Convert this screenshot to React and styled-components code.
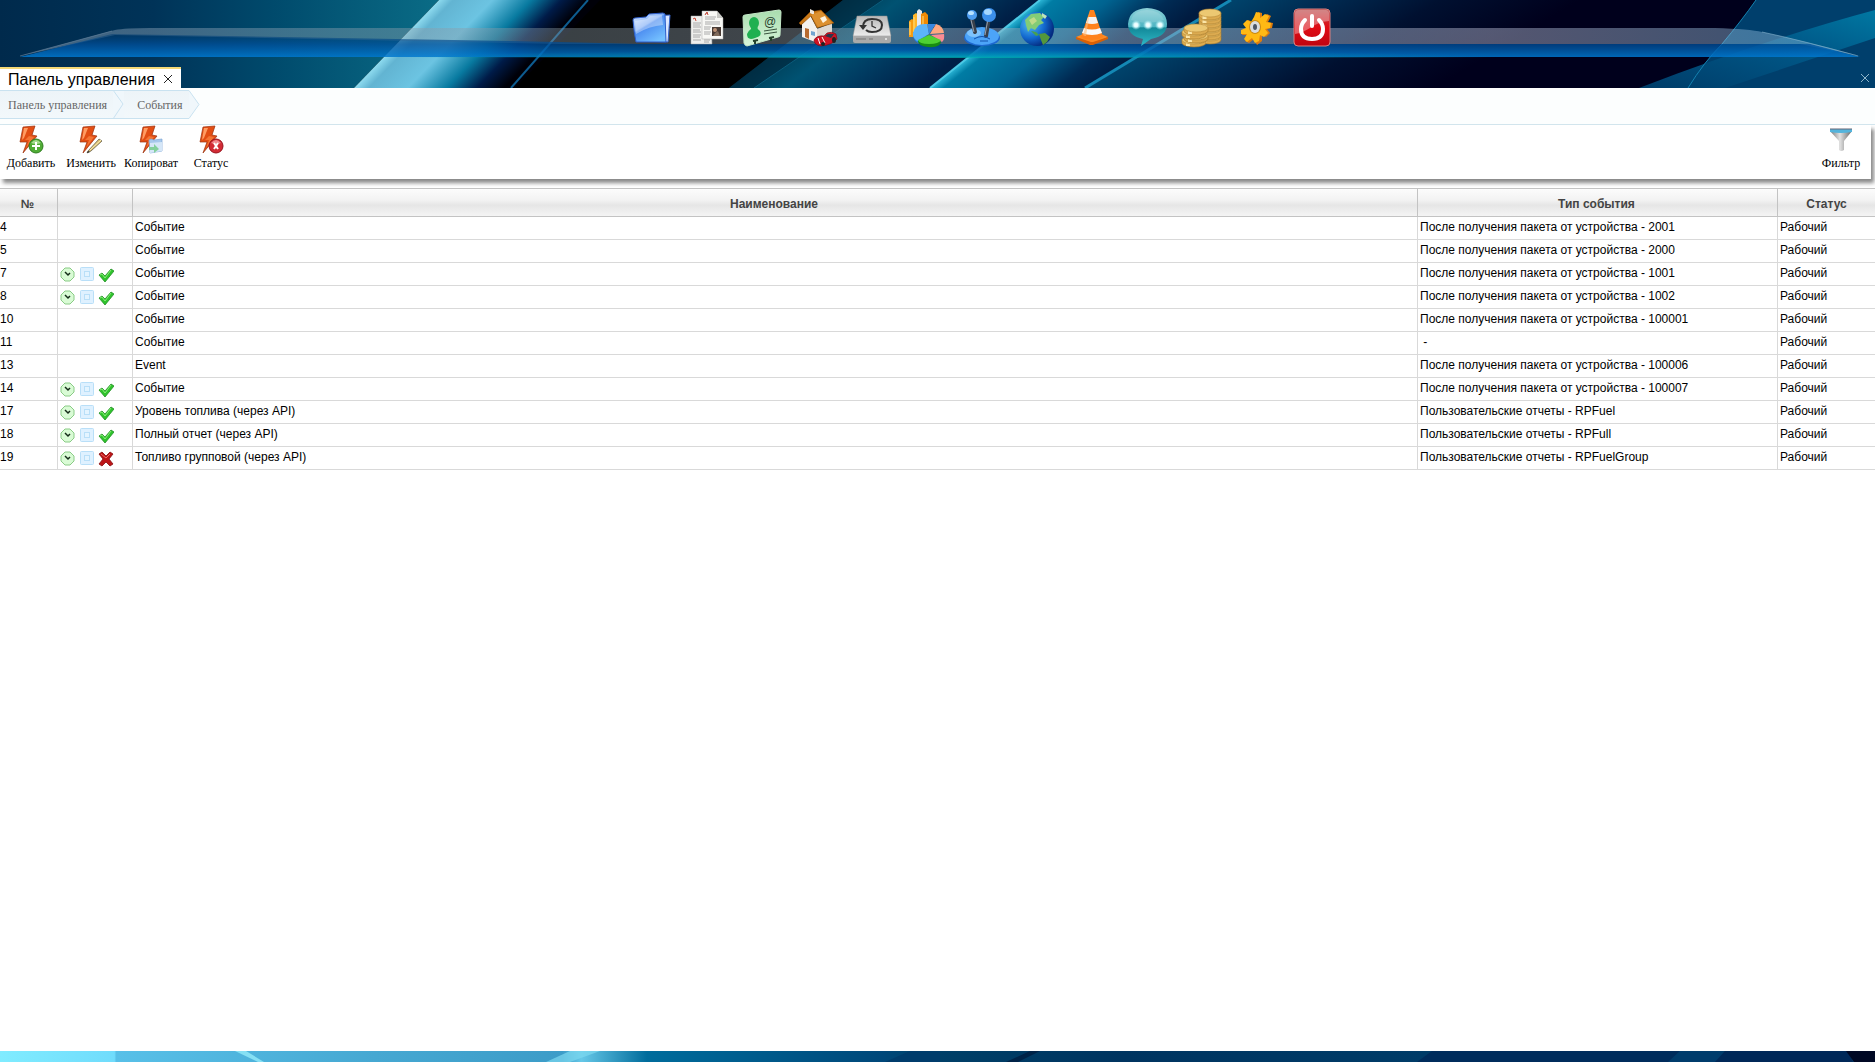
import React from 'react';
import styled, { createGlobalStyle } from 'styled-components';

const sans = '"Liberation Sans", Arial, sans-serif';
const serif = '"Liberation Serif", "Times New Roman", serif';

const GlobalStyle = createGlobalStyle`
  * {
    box-sizing: border-box;
  }

  body {
    margin: 0;
    background: #fff;
    font-family: ${sans};
    font-size: 12px;
    color: #000;
  }

  button {
    padding: 0;
    border: 0;
    background: none;
    color: inherit;
    cursor: pointer;
  }
`;

const Page = styled.div`
  display: grid;
  grid-template-rows: auto 1fr auto;
  min-height: 100vh;
`;

const Header = styled.header`
  position: relative;
  background: #001a38;
`;

const Backdrop = styled.svg`
  position: absolute;
  inset: 0;
  width: 100%;
  height: 100%;
`;

const Dock = styled.nav`
  position: relative;
  display: flex;
  justify-content: center;
  gap: 15px;
  height: 67px;
  padding: 5px 0 0 89px;
`;

const DockButton = styled.button`
  width: 40px;
  height: 44px;

  svg {
    display: block;
    width: 40px;
    height: 44px;
    overflow: visible;
  }
`;

const TabBar = styled.div`
  position: relative;
  display: flex;
  justify-content: space-between;
  height: 21px;
`;

const Tab = styled.div`
  display: flex;
  align-items: center;
  gap: 8px;
  padding: 0 8px;
  border-top: 2px solid #f3d978;
  background: #fff;
`;

const TabTitle = styled.button`
  padding-top: 2px;
  font: 16px/19px ${sans};
`;

const CloseButton = styled.button`
  width: 10px;
  color: ${(props) => (props.$light ? '#8fb6cc' : '#222')};
  margin-right: ${(props) => (props.$light ? '5px' : '0')};

  svg {
    display: block;
    width: 10px;
    height: 10px;
  }
`;

const Content = styled.main`
  padding-top: 2px;
  background: #fff;
`;

const Breadcrumbs = styled.nav`
  display: flex;
  height: 35px;
  background: #fcfefe;
  border-bottom: 1px solid #d3e6ee;
`;

const Crumb = styled.a`
  display: flex;
  align-items: center;
  height: 29px;
  padding: 2px 6px 2px ${(props) => (props.$first ? '8px' : '13px')};
  border: solid #c9e2f0;
  border-width: 1px 0;
  background: linear-gradient(#edf4f8, #f2f8fb);
  color: #666;
  font: 12px/14px ${serif};
  text-decoration: none;
`;

const CrumbArrow = styled.svg`
  width: 11px;
  height: 29px;
`;

const Toolbar = styled.div`
  display: flex;
  gap: 4px;
  height: 54px;
  margin-right: 4px;
  padding: 0 2px 0 3px;
  background: #fff;
  box-shadow: 3px 4px 4px #888;
`;

const ToolButton = styled.button`
  display: flex;
  flex-direction: column;
  align-items: center;
  width: 56px;
  margin-left: ${(props) => (props.$end ? 'auto' : '0')};
  font: 12px/14px ${serif};

  svg {
    width: 28px;
    height: 30px;
    margin-bottom: 1px;
    flex: none;
  }
`;

const ToolLabel = styled.span`
  white-space: nowrap;
`;

const Table = styled.table`
  width: 100%;
  margin-top: 9px;
  table-layout: fixed;
  border-collapse: separate;
  border-spacing: 0;
  border-top: 1px solid #c3c3c3;
`;

const HeadCell = styled.th`
  width: ${(props) => props.$width || 'auto'};
  height: 28px;
  padding: 2px 2px 0 0;
  border: solid #c3c3c3;
  border-width: 0 1px 1px 0;
  background: linear-gradient(#fcfcfc, #f3f3f3 40%, #e6e6e6 60%, #f4f4f4);
  color: #444;
  font-size: 12px;

  &:last-child {
    padding-right: 0;
    border-right: 0;
  }
`;

const Cell = styled.td`
  height: 23px;
  padding: 0 0 2px 2px;
  border: solid #d9d9d9;
  border-width: 0 1px 1px 0;
  line-height: 14px;
  white-space: pre;

  &:first-child {
    padding-left: 0;
  }

  &:last-child {
    border-right: 0;
  }
`;

const Flags = styled.div`
  display: flex;
  gap: 3px;
  height: 16px;

  svg {
    width: 16px;
    height: 18px;
  }
`;

const Footer = styled.footer`
  position: relative;
  height: 11px;
  background: #003660;
`;

const HeaderArt = () => (
  <Backdrop viewBox="0 0 1875 88" preserveAspectRatio="none" aria-hidden="true">
    <defs>
      <linearGradient id="left" x1="0" x2="1">
        <stop offset="0" stopColor="#002a4c" />
        <stop offset=".35" stopColor="#003358" />
        <stop offset=".62" stopColor="#004a6c" />
        <stop offset="1" stopColor="#0a6c86" />
      </linearGradient>
      <linearGradient id="beam" gradientUnits="userSpaceOnUse" x1="396" y1="44" x2="474" y2="119">
        <stop offset="0" stopColor="#8fdcf0" />
        <stop offset=".1" stopColor="#62b4d2" />
        <stop offset=".36" stopColor="#6cc4e2" />
        <stop offset=".62" stopColor="#087aa0" />
        <stop offset=".82" stopColor="#001b48" />
        <stop offset="1" stopColor="#000008" />
      </linearGradient>
      <linearGradient id="mid" gradientUnits="userSpaceOnUse" x1="785" y1="44" x2="856" y2="136">
        <stop offset="0" stopColor="#003c54" />
        <stop offset=".3" stopColor="#005272" />
        <stop offset=".6" stopColor="#003c62" />
        <stop offset="1" stopColor="#001f46" />
      </linearGradient>
      <linearGradient id="ray" gradientUnits="userSpaceOnUse" x1="985" y1="44" x2="1051" y2="127">
        <stop offset="0" stopColor="#2cb6d6" />
        <stop offset=".08" stopColor="#007ca4" />
        <stop offset=".4" stopColor="#006390" />
        <stop offset=".75" stopColor="#002b54" />
        <stop offset="1" stopColor="#001b40" />
      </linearGradient>
      <linearGradient id="night" gradientUnits="userSpaceOnUse" x1="1158" y1="44" x2="1252" y2="199">
        <stop offset="0" stopColor="#00446c" />
        <stop offset=".3" stopColor="#00284e" />
        <stop offset=".6" stopColor="#001030" />
        <stop offset="1" stopColor="#00001c" />
      </linearGradient>
      <linearGradient id="band" x1="0" x2="1" y1="1" y2="0">
        <stop offset="0" stopColor="#003c68" />
        <stop offset=".6" stopColor="#005888" />
        <stop offset="1" stopColor="#0078a2" />
      </linearGradient>
      <linearGradient id="gloss" x1="0" x2="1">
        <stop offset="0" stopColor="#8fa8c0" stopOpacity=".45" />
        <stop offset=".3" stopColor="#8a9aa4" stopOpacity=".42" />
        <stop offset=".8" stopColor="#c0c4dc" stopOpacity=".44" />
        <stop offset="1" stopColor="#7cb4d8" stopOpacity=".45" />
      </linearGradient>
      <linearGradient id="shelf" x1="0" x2="0" y1="0" y2="1">
        <stop offset="0" stopColor="#003c70" stopOpacity=".5" />
        <stop offset=".45" stopColor="#00509c" stopOpacity=".75" />
        <stop offset="1" stopColor="#0078d0" stopOpacity=".85" />
      </linearGradient>
      <radialGradient id="glow" cx=".5" cy="1" r=".5">
        <stop offset="0" stopColor="#00b4b4" stopOpacity=".8" />
        <stop offset="1" stopColor="#0090a0" stopOpacity="0" />
      </radialGradient>
    </defs>
    <rect width="1875" height="88" fill="#000" />
    <path d="M0 0H439L354 88H0Z" fill="url(#left)" />
    <path d="M439 0H600L515 88H354Z" fill="url(#beam)" />
    <path d="M588 0 511 88" stroke="#0d5c90" strokeWidth="2" />
    <path d="M843 0H1040L930 88H729Z" fill="url(#mid)" />
    <path d="M883 0 754 88H729L843 0Z" fill="#001d32" opacity=".5" />
    <path d="M883 0 754 88" stroke="#0a5c7c" strokeWidth="1" />
    <path d="M1040 0H1231L1085 88H930Z" fill="url(#ray)" />
    <path d="M1040 0 930 88" stroke="#4cc8e4" strokeWidth="2" />
    <path d="M1231 0H1875V88H1085Z" fill="url(#night)" />
    <path d="M1231 0 1085 88" stroke="#1488b4" strokeWidth="3" />
    <path d="M1756 0H1875V88H1688Q1704 62 1722 44Q1742 20 1756 0Z" fill="#003f6c" />
    <path d="M1875 10Q1770 38 1639 88H1725L1875 38Z" fill="url(#band)" />
    <path d="M1756 0Q1742 20 1722 44Q1704 62 1688 88" fill="none" stroke="#1482b0" strokeWidth="1" />
    <path d="M20 56 115 30Q125 28 150 28H1715Q1750 29 1762 32Q1800 40 1860 56L1800 44H560L115 35Z" fill="url(#gloss)" />
    <path d="M20 57 112 34 560 42 640 44H1810L1860 57Z" fill="url(#shelf)" />
    <path d="M20 56 112 31" stroke="#6a86a0" strokeWidth="1" opacity=".6" />
    <rect x="400" y="42" width="1100" height="16" fill="url(#glow)" />
    <path d="M1762 32Q1800 40 1858 56" fill="none" stroke="#8ab8d0" strokeWidth="1" opacity=".6" />
  </Backdrop>
);

const FooterArt = () => (
  <Backdrop viewBox="0 0 1875 11" preserveAspectRatio="none" aria-hidden="true">
    <defs>
      <linearGradient id="foot" gradientUnits="userSpaceOnUse" x1="0" x2="1875" y1="0" y2="0">
        <stop offset="0" stopColor="#80ecff" />
        <stop offset=".061" stopColor="#70dcfc" />
        <stop offset=".062" stopColor="#58c0e8" />
        <stop offset=".2" stopColor="#46a8d2" />
        <stop offset=".3" stopColor="#3c9cc8" />
        <stop offset=".31" stopColor="#66c8e8" />
        <stop offset=".345" stopColor="#006c9c" />
        <stop offset=".47" stopColor="#00487a" />
        <stop offset=".5" stopColor="#004068" />
        <stop offset=".6" stopColor="#003460" />
        <stop offset=".76" stopColor="#003c68" />
      </linearGradient>
    </defs>
    <rect width="1875" height="11" fill="url(#foot)" />
    <path d="M235 0H246L264 11H258Z" fill="#86e0f4" />
    <path d="M570 0H600L570 11H546Z" fill="#7cd8f0" opacity=".7" />
    <path d="M885 11 910 0H940V11Z" fill="#003c6c" />
    <path d="M1030 0H1040L1018 11H1006Z" fill="#002348" />
    <path d="M1432 0H1680L1670 11H1417Z" fill="#002c5c" />
    <path d="M1680 0H1725L1715 11H1668Z" fill="#003c6c" />
    <path d="M1725 0H1848L1853 11H1715Z" fill="#002858" />
    <path d="M1846 0H1875V11H1854Z" fill="#000824" />
  </Backdrop>
);

const CloseIcon = () => (
  <svg viewBox="0 0 10 10" stroke="currentColor" fill="none">
    <path d="M1 1 9 9M9 1 1 9" />
  </svg>
);

const FolderIcon = () => (
  <svg viewBox="0 0 40 44">
    <defs>
      <linearGradient id="folder" x1="0" y1="0" x2=".7" y2="1">
        <stop offset="0" stopColor="#e4f0ff" />
        <stop offset=".45" stopColor="#84b0f6" />
        <stop offset=".5" stopColor="#4c8cf0" />
        <stop offset="1" stopColor="#74c0ff" />
      </linearGradient>
    </defs>
    <path d="M22 11 38 10 36 37 8 36Z" fill="#dce8ff" stroke="#3764cc" />
    <path d="M1 15Q1 13 3 13L14 12 17 9 31 8 33 9 34 37 4 37Q2 28 1 15Z" fill="url(#folder)" stroke="#2c5cc8" />
    <path d="M3 16 15 14 18 11 30 10 31 20Q17 21 4 29Z" fill="#fff" opacity=".35" />
  </svg>
);

const NewsIcon = () => (
  <svg viewBox="0 0 40 44">
    <path d="M4 11H24L25 39H4Z" fill="#efefed" stroke="#aaa" strokeWidth=".5" />
    <path d="M6 18H14M6 20H13M6 22H14M6 25H13M6 27H14M6 30H14M6 32H13M6 35H14M17 35H23M17 37H22" stroke="#aaa" />
    <path d="M15 6H30L36 13V34H15Z" fill="#f8f8f5" stroke="#aaa" strokeWidth=".5" />
    <path d="M30 6V13H36Z" fill="#c8c8c4" />
    <path d="M18 9 21 8M18 12H29M18 14H28M18 17H33M18 19H33M17 22H24M17 24H23M17 27H24M17 29H23" stroke="#aaa" />
    <path d="M6 14 8 13 9 16M18 10 20 7 21 10" stroke="#c43" fill="none" />
    <rect x="25" y="22" width="9" height="9" fill="#493b35" />
    <circle cx="28" cy="25" r="2" fill="#bd9377" />
    <path d="M26 31 28 28 31 26 33 31Z" fill="#806b5c" />
  </svg>
);

const ContactIcon = () => (
  <svg viewBox="0 0 40 44">
    <defs>
      <linearGradient id="card" x1="0" y1="0" x2="0" y2="1">
        <stop offset="0" stopColor="#a9dcae" />
        <stop offset="1" stopColor="#d7f5da" />
      </linearGradient>
    </defs>
    <path d="M1 12Q1 10 3 10L37 5Q39 5 39 7L38 30Q38 32 36 32L5 41Q3 41 2 38Z" fill="url(#card)" stroke="#c4e8c8" />
    <ellipse cx="12" cy="18" rx="5" ry="6" fill="#1fb050" />
    <path d="M9 21H15Q15 24 18 26Q21 31 13 33Q5 36 5 29Q6 26 9 24Z" fill="#1fb050" />
    <text x="22" y="21" fontSize="12" fontFamily="Liberation Sans" fill="#263c2c">@</text>
    <path d="M22 26 35 24M22 29 35 27" stroke="#39533f" />
    <path d="M11 36 16 35M13 35V39M27 33 32 32M29 32V36" stroke="#25432c" strokeWidth="2" />
  </svg>
);

const HouseIcon = () => (
  <svg viewBox="0 0 40 44">
    <path d="M5 19 13 10 21 25V38L5 32Z" fill="#f4f1ed" />
    <path d="M20 24 35 18V31L20 38Z" fill="#ddd8d2" />
    <path d="M2 18 13 7 24 5 37 18 20 23 14 11 4 20Z" fill="#c97817" stroke="#8d4c0c" strokeWidth=".5" />
    <path d="M13 8V4L17 6V10Z" fill="#ece5dc" />
    <path d="M14 10 24 6 35 18 21 22Z" fill="#dc9030" />
    <path d="M23 13 28 11 30 15 26 18Z" fill="#fff4e0" />
    <path d="M8 23 12 24V34L8 32Z" fill="#b66a2f" />
    <path d="M14 26 18 27V31L14 30Z" fill="#73a5cf" />
    <path d="M17 35Q20 30 27 31L30 28Q35 26 39 29L40 34Q35 40 24 41Q17 40 17 35Z" fill="#cf1323" stroke="#750913" strokeWidth=".6" />
    <path d="M28 31 31 29 37 29 34 33Z" fill="#28384c" />
    <path d="M21 33 23 39M25 32 28 38" stroke="#fff" strokeWidth="1" />
    <ellipse cx="26" cy="39" rx="2" ry="2" fill="#222" />
    <ellipse cx="37" cy="35" rx="2" ry="3" fill="#222" />
  </svg>
);

const DriveIcon = () => (
  <svg viewBox="0 0 40 44">
    <defs>
      <linearGradient id="drive" x1="0" y1="0" x2="0" y2="1">
        <stop offset="0" stopColor="#b8b8b8" />
        <stop offset="1" stopColor="#ececec" />
      </linearGradient>
    </defs>
    <path d="M5 11H35L39 31H1Z" fill="url(#drive)" stroke="#888" strokeWidth=".5" />
    <path d="M1 31H39V36Q39 38 37 38H3Q1 38 1 36Z" fill="#aaa" />
    <path d="M4 34H14M17 34H21" stroke="#777" />
    <circle cx="34" cy="34" r="1" fill="#eee" />
    <path d="M11 22Q11 14 20 14Q30 14 30 20Q30 27 20 27Q16 27 14 25" fill="none" stroke="#333" strokeWidth="2" />
    <path d="M7 20H15L11 25Z" fill="#333" />
    <path d="M20 16V21L24 23" fill="none" stroke="#333" strokeWidth="1.3" />
  </svg>
);

const ChartIcon = () => (
  <svg viewBox="0 0 40 44">
    <path d="M2 16 5 14 8 16V32H2Z" fill="#f79b11" />
    <path d="M6 10 9 8 12 10V28H6Z" fill="#ffb52a" />
    <path d="M10 6 12 4 15 6V26H10Z" fill="#e5e9ef" />
    <path d="M14 9 18 7 21 10V25H14Z" fill="#ef8a06" />
    <path d="M3 17V30M7 12V28M16 11V24" stroke="#ffdf7a" />
    <path d="M6 27V31Q7 36 11 38L22 32Z" fill="#257fe1" />
    <path d="M6 28Q8 18 20 19L22 29 10 36Q5 32 6 28Z" fill="#5cb4fa" />
    <path d="M20 19H29L22 29Z" fill="#3a88e0" />
    <path d="M29 19Q36 21 37 28L23 29Z" fill="#ffa880" />
    <path d="M37 29Q38 34 35 37L24 30Z" fill="#fa8c94" />
    <path d="M11 36 22 30 34 37Q33 43 21 42Q11 41 11 36Z" fill="#188b12" />
    <path d="M11 35 22 30 34 35Q32 39 22 39Q12 39 11 35Z" fill="#4ed032" />
  </svg>
);

const JoystickIcon = () => (
  <svg viewBox="0 0 40 44">
    <ellipse cx="20" cy="33" rx="18" ry="8" fill="#1e68cf" />
    <ellipse cx="20" cy="31" rx="17" ry="9" fill="#4ca4f8" />
    <ellipse cx="12" cy="28" rx="7" ry="4" fill="#94d0ff" opacity=".7" />
    <path d="M10 14 13 27M27 13 24 31" stroke="#39404b" strokeWidth="4" strokeLinecap="round" />
    <path d="M9 15 12 27M26 14 23 30" stroke="#98a2b0" />
    <circle cx="10" cy="10" r="5" fill="#4c9cf0" />
    <circle cx="27" cy="10" r="7" fill="#3c90ec" />
    <ellipse cx="9" cy="8" rx="3" ry="2" fill="#b7e1ff" />
    <ellipse cx="26" cy="7" rx="4" ry="3" fill="#a5d7ff" />
    <path d="M12 34Q20 29 28 34M18 36H26" fill="none" stroke="#1252ac" />
  </svg>
);

const GlobeIcon = () => (
  <svg viewBox="0 0 40 44">
    <defs>
      <radialGradient id="globe" cx=".3" cy=".35" r=".7">
        <stop offset="0" stopColor="#52c0f6" />
        <stop offset=".6" stopColor="#1268ce" />
        <stop offset="1" stopColor="#042c80" />
      </radialGradient>
    </defs>
    <circle cx="20" cy="24" r="17" fill="url(#globe)" />
    <path d="M8 15 14 9 23 8 27 12 24 15 27 18 22 20 18 25 14 23 11 27 9 20Z" fill="#82cc77" />
    <path d="M25 8 30 11 28 14 25 11Z" fill="#bce4bb" />
    <path d="M14 26 19 27 22 30 19 31Z" fill="#46a050" />
    <path d="M22 29 28 28 33 32 30 37 26 40 24 35Z" fill="#54973b" />
    <path d="M12 15 17 12 20 16 15 20Z" fill="#c0db88" />
  </svg>
);

const ConeIcon = () => (
  <svg viewBox="0 0 40 44">
    <path d="M4 32 14 28H27L36 32 21 39H18Z" fill="#ff8b22" />
    <path d="M4 32 19 37H21L36 32V34L21 40H18L4 34Z" fill="#d86007" />
    <path d="M18 5H22L31 32Q20 38 9 32Z" fill="#ff821c" />
    <path d="M16 12H24L26 18Q20 20 14 18Z" fill="#f3f3f3" />
    <path d="M12 23Q20 26 28 23L30 28Q20 32 10 28Z" fill="#fafafa" />
    <path d="M18 6 14 31Q12 31 11 30Z" fill="#ffc080" opacity=".6" />
  </svg>
);

const ChatIcon = () => (
  <svg viewBox="0 0 40 44">
    <defs>
      <linearGradient id="chat" x1="0" y1="0" x2="0" y2="1">
        <stop offset="0" stopColor="#8cd0d8" />
        <stop offset=".5" stopColor="#4cb4c2" />
        <stop offset=".52" stopColor="#128898" />
        <stop offset="1" stopColor="#30bac8" />
      </linearGradient>
      <radialGradient id="dot">
        <stop offset="0" stopColor="#fff" />
        <stop offset=".4" stopColor="#e0fcff" />
        <stop offset="1" stopColor="#a0e4ec" stopOpacity="0" />
      </radialGradient>
    </defs>
    <path d="M20 3Q40 4 40 19Q40 31 24 34L14 41 16 34Q1 31 1 19Q2 4 20 3Z" fill="url(#chat)" />
    <path d="M4 15Q7 5 20 5Q33 5 37 15Q20 21 4 15Z" fill="#fff" opacity=".15" />
    <g fill="url(#dot)">
      <circle cx="9" cy="20" r="5" />
      <circle cx="21" cy="20" r="5" />
      <circle cx="33" cy="20" r="5" />
    </g>
  </svg>
);

const Coin = ({ x, y, r }) => (
  <g>
    <path d={`M${x - r} ${y}V${y + 3}A${r} 4 0 0 0 ${x + r} ${y + 3}V${y}Z`} fill="#dcab50" stroke="#a87a2c" strokeWidth=".6" />
    <path d={`M${x - r / 2} ${y + 3}V${y + 6}`} stroke="#fbe6a8" strokeWidth="4" />
    <ellipse cx={x} cy={y} rx={r} ry="4" fill="#ecc872" stroke="#b88a38" strokeWidth=".6" />
  </g>
);

const CoinsIcon = () => (
  <svg viewBox="0 0 40 44">
    {[32, 28, 24, 20, 16, 12, 8].map((y) => (
      <Coin key={y} x={28} y={y} r={11} />
    ))}
    {[35, 31, 27, 23].map((y, i) => (
      <Coin key={y} x={i % 2 ? 14 : 12} y={y} r={12} />
    ))}
  </svg>
);

const GearIcon = () => (
  <svg viewBox="0 0 40 44">
    <path d="M19 12 21 7 25 8 25 13 30 9 34 11 31 17 36 18 35 23 30 24 33 28 29 32 25 30 25 36 20 40 17 34 12 38 8 36 11 30 5 30 6 25 11 23 7 20 11 15 16 17Z" fill="#e07c0c" />
    <path d="M17 12 19 7 23 8 23 13 28 9 32 11 29 17 34 18 33 23 28 24 31 28 27 32 23 30 22 36 18 38 15 33 10 37 7 34 10 29 4 29 4 25 9 23 6 19 10 15 14 17Z" fill="#ffb914" />
    <ellipse cx="18" cy="22" rx="6" ry="7" fill="#c88916" />
    <ellipse cx="18" cy="22" rx="5" ry="6" fill="#d9dce1" />
    <ellipse cx="18" cy="22" rx="2" ry="3" fill="#4b5566" />
  </svg>
);

const PowerIcon = () => (
  <svg viewBox="0 0 40 44">
    <defs>
      <linearGradient id="power" x1="0" y1="0" x2="0" y2="1">
        <stop offset="0" stopColor="#b84848" />
        <stop offset=".5" stopColor="#e00c14" />
        <stop offset="1" stopColor="#c00410" />
      </linearGradient>
    </defs>
    <rect x="2" y="4" width="36" height="37" rx="4" fill="url(#power)" stroke="#d88080" />
    <path d="M3 8Q3 5 6 5H34Q37 5 37 8V16Q26 17 18 23Q10 28 3 29Z" fill="#fff" opacity=".35" />
    <path d="M13 15Q9 19 9 24Q9 34 20 34Q31 34 31 24Q31 19 27 15" fill="none" stroke="#fff" strokeWidth="4" strokeLinecap="round" />
    <path d="M20 11V21" stroke="#fff" strokeWidth="4" strokeLinecap="round" />
  </svg>
);

const Bolt = () => (
  <>
    <path d="M6 2 18 1 15 10 20 11 6 28 10 17 3 17Z" fill="#e24d13" stroke="#9a3210" strokeWidth=".7" />
    <path d="M7 3 11 3 7 13 5 15Z" fill="#ff9c63" />
    <path d="M12 11 17 12 9 23 12 15 8 15Z" fill="#f47434" />
  </>
);

const AddIcon = () => (
  <svg viewBox="0 0 28 30">
    <Bolt />
    <circle cx="19" cy="21" r="7" fill="#4fac35" stroke="#2f7d20" />
    <path d="M14 18Q19 12 24 18Q19 20 14 18Z" fill="#a5dc90" />
    <path d="M19 17V25M15 21H23" stroke="#fff" strokeWidth="2" />
  </svg>
);

const EditIcon = () => (
  <svg viewBox="0 0 28 30">
    <Bolt />
    <path d="M11 26 22 14 25 16 14 26 10 28Z" fill="#d9bd70" stroke="#6b6450" strokeWidth=".8" />
    <path d="M13 25 24 15" stroke="#fff0b4" />
    <path d="M10 28 11 26 13 27Z" fill="#222" />
  </svg>
);

const CopyIcon = () => (
  <svg viewBox="0 0 28 30">
    <Bolt />
    <path d="M12 15 14 14 17 15 25 14V26L13 28Z" fill="#a7c8ec" stroke="#7fa8d5" strokeWidth=".7" />
    <path d="M13 18 25 17V26L13 28Z" fill="#d6e7f8" />
    <path d="M12 22H17V19L22 24 17 28V25H12Z" fill="#84d09c" />
  </svg>
);

const StatusIcon = () => (
  <svg viewBox="0 0 28 30">
    <Bolt />
    <circle cx="19" cy="21" r="7" fill="#d22b35" stroke="#98121c" />
    <path d="M14 18Q19 12 24 18Q19 20 14 18Z" fill="#f08c90" />
    <path d="M17 18 21 24M21 18 17 24" stroke="#fff" strokeWidth="2" />
  </svg>
);

const FilterIcon = () => (
  <svg viewBox="0 0 28 30">
    <defs>
      <linearGradient id="funnel" x1="0" x2="1">
        <stop offset="0" stopColor="#777" />
        <stop offset=".45" stopColor="#e2e2e2" />
        <stop offset="1" stopColor="#666" />
      </linearGradient>
    </defs>
    <path d="M3 6H25L17 16V25Q14 27 12 25V16Z" fill="url(#funnel)" />
    <path d="M3 4H25V7Q14 9 3 7Z" fill="#54b4dc" />
    <path d="M3 4H25" stroke="#667" />
  </svg>
);

const ClockIcon = () => (
  <svg viewBox="0 0 16 18">
    <path d="M5 3H10L14 7V12L10 16H5L1 12V7Z" fill="#d9fbd5" stroke="#8acb86" />
    <path d="M5 7 8 10 10 8" fill="none" stroke="#142c18" strokeWidth="1.5" />
  </svg>
);

const FrameIcon = () => (
  <svg viewBox="0 0 16 18">
    <rect x="1.5" y="2.5" width="13" height="13" rx="1" fill="#dff1ff" stroke="#b9dff8" />
    <rect x="5.5" y="6.5" width="5" height="5" fill="#e4f4ff" stroke="#b9dff8" />
  </svg>
);

const CheckIcon = () => (
  <svg viewBox="0 0 16 18">
    <path d="M1 10 4 8 7 11 13 4 16 6 7 17Z" fill="#2fc42c" stroke="#218e25" strokeWidth=".8" />
    <path d="M2 10 4 9 7 13 13 5" fill="none" stroke="#8aeb78" />
  </svg>
);

const CrossIcon = () => (
  <svg viewBox="0 0 16 18">
    <path d="M1 5 4 3 8 7 12 3 15 5 11 10 15 15 12 17 8 13 4 17 1 15 5 10Z" fill="#bd1517" stroke="#870e10" strokeWidth=".8" />
    <path d="M3 5 8 9 12 5" fill="none" stroke="#ee6a65" />
  </svg>
);

const dockItems = [
  ['Файлы', FolderIcon],
  ['Новости', NewsIcon],
  ['Контакты', ContactIcon],
  ['Объекты', HouseIcon],
  ['История', DriveIcon],
  ['Отчеты', ChartIcon],
  ['Управление', JoystickIcon],
  ['Карта', GlobeIcon],
  ['Дороги', ConeIcon],
  ['Сообщения', ChatIcon],
  ['Оплата', CoinsIcon],
  ['Настройки', GearIcon],
  ['Выход', PowerIcon],
];

const tools = [
  ['Добавить', AddIcon],
  ['Изменить', EditIcon],
  ['Копироват', CopyIcon],
  ['Статус', StatusIcon],
];

const packet = 'После получения пакета от устройства - ';
const report = 'Пользовательские отчеты - ';

const events = [
  { id: 4, name: 'Событие', type: `${packet}2001` },
  { id: 5, name: 'Событие', type: `${packet}2000` },
  { id: 7, name: 'Событие', type: `${packet}1001`, flag: 'on' },
  { id: 8, name: 'Событие', type: `${packet}1002`, flag: 'on' },
  { id: 10, name: 'Событие', type: `${packet}100001` },
  { id: 11, name: 'Событие', type: ' -' },
  { id: 13, name: 'Event', type: `${packet}100006` },
  { id: 14, name: 'Событие', type: `${packet}100007`, flag: 'on' },
  { id: 17, name: 'Уровень топлива (через API)', type: `${report}RPFuel`, flag: 'on' },
  { id: 18, name: 'Полный отчет (через API)', type: `${report}RPFull`, flag: 'on' },
  { id: 19, name: 'Топливо групповой (через API)', type: `${report}RPFuelGroup`, flag: 'off' },
];

const EventRow = ({ event }) => (
  <tr>
    <Cell>{event.id}</Cell>
    <Cell>
      {event.flag && (
        <Flags>
          <ClockIcon />
          <FrameIcon />
          {event.flag === 'on' ? <CheckIcon /> : <CrossIcon />}
        </Flags>
      )}
    </Cell>
    <Cell>{event.name}</Cell>
    <Cell>{event.type}</Cell>
    <Cell>Рабочий</Cell>
  </tr>
);

const App = () => (
  <Page>
    <GlobalStyle />
    <Header>
      <HeaderArt />
      <Dock>
        {dockItems.map(([label, Icon]) => (
          <DockButton key={label} type="button" aria-label={label}>
            <Icon />
          </DockButton>
        ))}
      </Dock>
      <TabBar>
        <Tab>
          <TabTitle type="button">Панель управления</TabTitle>
          <CloseButton type="button" aria-label="Закрыть вкладку">
            <CloseIcon />
          </CloseButton>
        </Tab>
        <CloseButton type="button" aria-label="Закрыть все" $light>
          <CloseIcon />
        </CloseButton>
      </TabBar>
    </Header>

    <Content>
      <Breadcrumbs>
        <Crumb href="#panel" $first>
          Панель управления
        </Crumb>
        <CrumbArrow viewBox="0 0 11 29">
          <rect width="11" height="29" fill="#f0f7fb" />
          <path d="M0 .5H11M0 28.5H11M0 0 10 14 0 29" fill="none" stroke="#c9e2f0" />
        </CrumbArrow>
        <Crumb href="#events">События</Crumb>
        <CrumbArrow viewBox="0 0 11 29">
          <path d="M0 .5 10 14.5 0 28.5" fill="#f0f7fb" stroke="#c9e2f0" />
        </CrumbArrow>
      </Breadcrumbs>

      <Toolbar>
        {tools.map(([label, Icon]) => (
          <ToolButton key={label} type="button">
            <Icon />
            <ToolLabel>{label}</ToolLabel>
          </ToolButton>
        ))}
        <ToolButton type="button" $end>
          <FilterIcon />
          <ToolLabel>Фильтр</ToolLabel>
        </ToolButton>
      </Toolbar>

      <Table>
        <thead>
          <tr>
            <HeadCell $width="58px">№</HeadCell>
            <HeadCell $width="75px" aria-label="Состояние" />
            <HeadCell>Наименование</HeadCell>
            <HeadCell $width="360px">Тип события</HeadCell>
            <HeadCell $width="97px">Статус</HeadCell>
          </tr>
        </thead>
        <tbody>
          {events.map((event) => (
            <EventRow key={event.id} event={event} />
          ))}
        </tbody>
      </Table>
    </Content>

    <Footer>
      <FooterArt />
    </Footer>
  </Page>
);

export default App;
